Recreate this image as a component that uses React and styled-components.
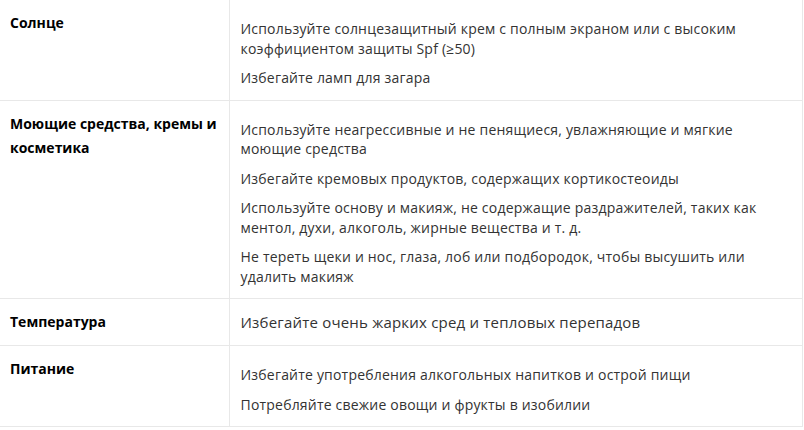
import React from 'react';
import styled, { createGlobalStyle } from 'styled-components';

const GlobalStyle = createGlobalStyle`
    html, body {
        margin: 0;
        padding: 0;
        background: #ffffff;
    }

    body {
        font-family: "Open Sans", "Noto Sans", sans-serif;
        -webkit-font-smoothing: antialiased;
    }
`;

const Table = styled.table`
    width: 803px;
    border-collapse: collapse;
    table-layout: fixed;
`;

const Row = styled.tr`
    border-bottom: 1px solid #e8e8e8;
`;

const LabelCell = styled.th`
    width: 229px;
    box-sizing: border-box;
    padding: 11px 10px;
    vertical-align: top;
    text-align: left;
    font-size: 14px;
    line-height: 24px;
    font-weight: 700;
    color: #000000;
`;

const ContentCell = styled.td`
    padding: ${({ $plain }) => ($plain ? '11px 30px 11px 11px' : '9px 30px 12px 11px')};
    vertical-align: top;
    border-left: 1px solid #e8e8e8;
    border-right: 1px solid #e8e8e8;
    font-size: ${({ $plain }) => ($plain ? '15px' : '14px')};
    line-height: ${({ $plain }) => ($plain ? '24px' : '19.5px')};
    letter-spacing: 0.2px;
    color: #333333;
`;

const Note = styled.p`
    margin: 10px 0 0;
`;

const rows = [
    {
        label: 'Солнце',
        notes: [
            'Используйте солнцезащитный крем с полным экраном или с высоким коэффициентом защиты Spf (≥50)',
            'Избегайте ламп для загара',
        ],
    },
    {
        label: 'Моющие средства, кремы и косметика',
        notes: [
            'Используйте неагрессивные и не пенящиеся, увлажняющие и мягкие моющие средства',
            'Избегайте кремовых продуктов, содержащих кортикостеоиды',
            'Используйте основу и макияж, не содержащие раздражителей, таких как ментол, духи, алкоголь, жирные вещества и т. д.',
            'Не тереть щеки и нос, глаза, лоб или подбородок, чтобы высушить или удалить макияж',
        ],
    },
    {
        label: 'Температура',
        text: 'Избегайте очень жарких сред и тепловых перепадов',
    },
    {
        label: 'Питание',
        notes: [
            'Избегайте употребления алкогольных напитков и острой пищи',
            'Потребляйте свежие овощи и фрукты в изобилии',
        ],
    },
];

const App = () => (
    <React.Fragment>
        <GlobalStyle />
        <Table>
            <tbody>
                {rows.map((row) => (
                    <Row key={row.label}>
                        <LabelCell>{row.label}</LabelCell>
                        {row.text ? (
                            <ContentCell $plain>{row.text}</ContentCell>
                        ) : (
                            <ContentCell>
                                {row.notes.map((note) => (
                                    <Note key={note}>{note}</Note>
                                ))}
                            </ContentCell>
                        )}
                    </Row>
                ))}
            </tbody>
        </Table>
    </React.Fragment>
);

export default App;
